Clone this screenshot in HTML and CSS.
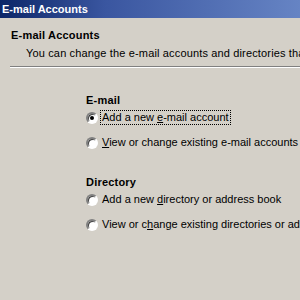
FILE: index.html
```html
<!DOCTYPE html>
<html lang="en">
<head>
    <meta charset="UTF-8">
    <title>E-mail Accounts</title>
    <link rel="stylesheet" href="styles.css">
</head>
<body>
    <div class="window">
        <div class="titlebar">E-mail Accounts</div>

        <div class="header">
            <h1>E-mail Accounts</h1>
            <p class="subtitle">You can change the e-mail accounts and directories that Outlook uses.</p>
        </div>
        <div class="separator"></div>

        <div class="options">
            <div class="group">
                <h2>E-mail</h2>
                <label class="radio">
                    <span class="dot checked"></span>
                    <span class="text focus">Add a new <u>e</u>-mail account</span>
                </label>
                <label class="radio">
                    <span class="dot"></span>
                    <span class="text"><u>V</u>iew or change existing e-mail accounts</span>
                </label>
            </div>

            <div class="group">
                <h2>Directory</h2>
                <label class="radio">
                    <span class="dot"></span>
                    <span class="text">Add a new <u>d</u>irectory or address book</span>
                </label>
                <label class="radio">
                    <span class="dot"></span>
                    <span class="text">View or c<u>h</u>ange existing directories or address books</span>
                </label>
            </div>
        </div>
    </div>
</body>
</html>
```

FILE: styles.css
```css
body {
    margin: 0;
    background: #d4d0c8;
    font-family: Tahoma, "Liberation Sans", sans-serif;
    font-size: 11px;
    line-height: 13px;
    color: #000;
    overflow: hidden;
}

.window {
    width: 300px;
    height: 300px;
    overflow: hidden;
}

.titlebar {
    height: 18px;
    line-height: 18px;
    padding-left: 2px;
    background: linear-gradient(90deg, #0c2668 0%, #3a56a0 35%, #6684c4 100%);
    color: #fff;
    font-weight: bold;
    font-size: 11px;
    white-space: nowrap;
}

.header {
    padding: 11px 0 0 11px;
    height: 37px;
}

h1 {
    margin: 0;
    font-size: 11px;
    font-weight: bold;
    letter-spacing: 0.2px;
}

.subtitle {
    margin: 5px 0 0 15px;
    letter-spacing: 0.15px;
    white-space: nowrap;
}

.separator {
    margin-left: 10px;
    border-top: 1px solid #808080;
    border-bottom: 1px solid #fff;
}

.options {
    padding: 26px 0 0 86px;
}

.group {
    margin-bottom: 23px;
}

h2 {
    margin: 0;
    font-size: 11px;
    font-weight: bold;
    letter-spacing: 0.2px;
}

.radio {
    display: flex;
    align-items: center;
    gap: 2px;
    height: 21px;
    white-space: nowrap;
}

.radio + .radio {
    margin-top: 4px;
}

.dot {
    flex: none;
    width: 8px;
    height: 8px;
    border-radius: 50%;
    background: #fff;
    border: 2px solid;
    border-color: #808080 #fff #fff #808080;
    box-shadow: inset 1px 1px 0 #404040;
    position: relative;
}

.dot.checked::after {
    content: "";
    position: absolute;
    left: 2px;
    top: 2px;
    width: 4px;
    height: 4px;
    border-radius: 50%;
    background: #000;
}

.text {
    padding: 0 1px;
    border: 1px dotted transparent;
}

.text.focus {
    border-color: #000;
}
```
